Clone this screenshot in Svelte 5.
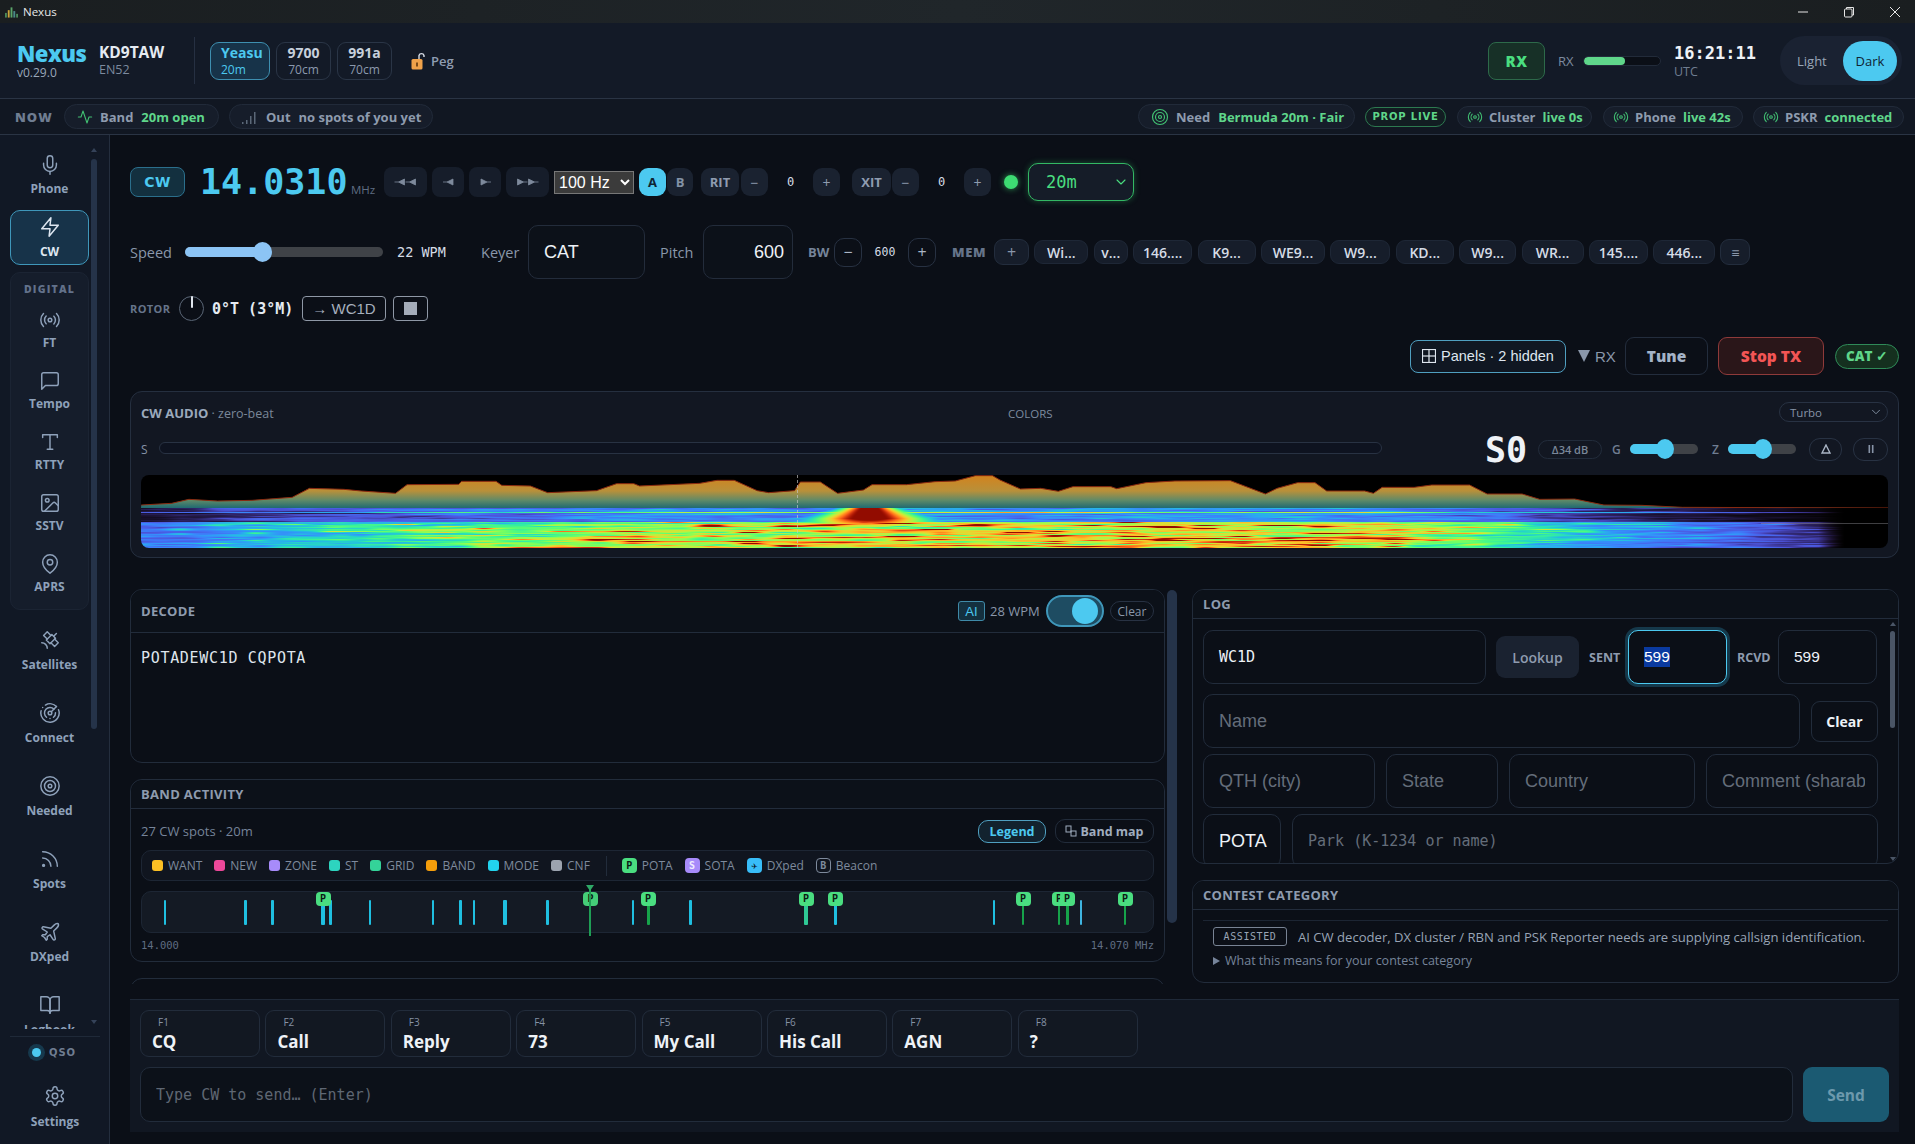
<script>
  import { onMount } from 'svelte';

  const icons = {
    mic: '<path d="M12 2a3 3 0 0 0-3 3v7a3 3 0 0 0 6 0V5a3 3 0 0 0-3-3Z"/><path d="M19 10v2a7 7 0 0 1-14 0v-2"/><line x1="12" x2="12" y1="19" y2="22"/>',
    zap: '<path d="M13 2 3 14h9l-1 8 10-12h-9l1-8z"/>',
    radio: '<path d="M4.9 19.1C1 15.2 1 8.8 4.9 4.9"/><path d="M7.8 16.2c-2.3-2.3-2.3-6.1 0-8.5"/><circle cx="12" cy="12" r="2"/><path d="M16.2 7.8c2.3 2.3 2.3 6.1 0 8.5"/><path d="M19.1 4.9C23 8.8 23 15.1 19.1 19"/>',
    msg: '<path d="M21 15a2 2 0 0 1-2 2H7l-4 4V5a2 2 0 0 1 2-2h14a2 2 0 0 1 2 2z"/>',
    type: '<polyline points="4 7 4 4 20 4 20 7"/><line x1="9" x2="15" y1="20" y2="20"/><line x1="12" x2="12" y1="4" y2="20"/>',
    image: '<rect width="18" height="18" x="3" y="3" rx="2"/><circle cx="9" cy="9" r="2"/><path d="m21 15-3.086-3.086a2 2 0 0 0-2.828 0L6 21"/>',
    pin: '<path d="M20 10c0 6-8 12-8 12s-8-6-8-12a8 8 0 0 1 16 0Z"/><circle cx="12" cy="10" r="3"/>',
    sat: '<path d="M13 7 9 3 5 7l4 4"/><path d="m17 11 4 4-4 4-4-4"/><path d="m8 12 4 4 6-6-4-4Z"/><path d="m16 8 3-3"/><path d="M9 21a6 6 0 0 0-6-6"/>',
    radar: '<path d="M19.07 4.93A10 10 0 0 0 6.99 3.34"/><path d="M4 6h.01"/><path d="M2.29 9.62A10 10 0 1 0 21.31 8.35"/><path d="M16.24 7.76A6 6 0 1 0 8.23 16.67"/><path d="M12 18h.01"/><path d="M17.99 11.66A6 6 0 0 1 15.77 16.67"/><circle cx="12" cy="12" r="2"/><path d="m13.41 10.59 5.66-5.66"/>',
    target: '<circle cx="12" cy="12" r="10"/><circle cx="12" cy="12" r="6"/><circle cx="12" cy="12" r="2"/>',
    rss: '<path d="M4 11a9 9 0 0 1 9 9"/><path d="M4 4a16 16 0 0 1 16 16"/><circle cx="5" cy="19" r="1"/>',
    plane: '<path d="M17.8 19.2 16 11l3.5-3.5C21 6 21.5 4 21 3c-1-.5-3 0-4.5 1.5L13 8 4.8 6.2c-.5-.1-.9.1-1.1.5l-.3.5c-.2.5-.1 1 .3 1.3L9 12l-2 3H4l-1 1 3 2 2 3 1-1v-3l3-2 3.5 5.3c.3.4.8.5 1.3.3l.5-.2c.4-.3.6-.7.5-1.2z"/>',
    book: '<path d="M2 3h6a4 4 0 0 1 4 4v14a3 3 0 0 0-3-3H2z"/><path d="M22 3h-6a4 4 0 0 0-4 4v14a3 3 0 0 1 3-3h7z"/>',
    gear: '<path d="M12.22 2h-.44a2 2 0 0 0-2 2v.18a2 2 0 0 1-1 1.73l-.43.25a2 2 0 0 1-2 0l-.15-.08a2 2 0 0 0-2.73.73l-.22.38a2 2 0 0 0 .73 2.73l.15.1a2 2 0 0 1 1 1.72v.51a2 2 0 0 1-1 1.74l-.15.09a2 2 0 0 0-.73 2.73l.22.38a2 2 0 0 0 2.73.73l.15-.08a2 2 0 0 1 2 0l.43.25a2 2 0 0 1 1 1.73V20a2 2 0 0 0 2 2h.44a2 2 0 0 0 2-2v-.18a2 2 0 0 1 1-1.73l.43-.25a2 2 0 0 1 2 0l.15.08a2 2 0 0 0 2.73-.73l.22-.39a2 2 0 0 0-.73-2.73l-.15-.08a2 2 0 0 1-1-1.74v-.5a2 2 0 0 1 1-1.74l.15-.09a2 2 0 0 0 .73-2.73l-.22-.38a2 2 0 0 0-2.73-.73l-.15.08a2 2 0 0 1-2 0l-.43-.25a2 2 0 0 1-1-1.73V4a2 2 0 0 0-2-2z"/><circle cx="12" cy="12" r="3"/>',
    activity: '<path d="M22 12h-4l-3 9L9 3l-3 9H2"/>',
    chev: '<path d="m6 9 6 6 6-6"/>'
  };

  const digital = [
    { icon: 'radio', label: 'FT' },
    { icon: 'msg', label: 'Tempo' },
    { icon: 'type', label: 'RTTY' },
    { icon: 'image', label: 'SSTV' },
    { icon: 'pin', label: 'APRS' }
  ];
  const others = [
    { icon: 'sat', label: 'Satellites' },
    { icon: 'radar', label: 'Connect' },
    { icon: 'target', label: 'Needed' },
    { icon: 'rss', label: 'Spots' },
    { icon: 'plane', label: 'DXped' },
    { icon: 'book', label: 'Logbook' }
  ];

  const mems = [
    ['Wi...', 54], ['v...', 34], ['146....', 59], ['K9...', 58], ['WE9...', 64], ['W9...', 60],
    ['KD...', 58], ['W9...', 57], ['WR...', 62], ['145....', 59], ['446...', 62]
  ];

  const legend = [
    ['WANT', '#fbbf24'], ['NEW', '#ec4899'], ['ZONE', '#a78bfa'], ['ST', '#2dd4bf'],
    ['GRID', '#34d399'], ['BAND', '#f59e0b'], ['MODE', '#22d3ee'], ['CNF', '#9ca3af']
  ];

  const fkeys = [
    ['F1', 'CQ'], ['F2', 'Call'], ['F3', 'Reply'], ['F4', '73'],
    ['F5', 'My Call'], ['F6', 'His Call'], ['F7', 'AGN'], ['F8', '?']
  ];

  // spot x positions are page px, timeline starts at 142
  const cy = '#1fbfe0';
  const bars = [
    [165, 2, cy], [245, 3, cy], [272, 3, cy], [323, 4, cy], [330, 3, cy], [370, 2, cy], [433, 2, cy],
    [460, 3, cy], [474, 2, cy], [505, 4, cy], [547, 3, cy], [633, 2, cy], [648, 3, '#16a34a'],
    [690, 3, cy], [806, 4, '#2fc995'], [835, 3, cy], [994, 2, cy], [1023, 2, '#16a34a'],
    [1059, 2, '#16a34a'], [1067, 3, '#16a34a'], [1081, 2, '#3fb4e0'], [1125, 2, '#16a34a']
  ];
  const pins = [323, 648, 806, 835, 1023, 1059, 1067, 1125];

  const specA = [[37,375],[90,370],[120,358],[170,363],[230,361],[300,352],[330,325],[390,328],[420,333],[480,340],[500,314],[590,313],[595,304],[655,304],[665,316],[715,318],[745,338],[830,332],[865,311],[895,311],[905,318],[1010,310],[1040,301],[1070,301],[1110,332],[1130,338],[1175,332],[1185,306],[1220,306],[1250,340],[1295,330],[1310,314],[1370,314],[1420,305],[1455,303],[1490,287],[1520,287]];
  const specB = [[0,300],[35,327],[70,325],[100,334],[125,320],[190,320],[200,326],[250,308],[300,303],[395,302],[455,342],[475,325],[510,308],[540,308],[560,333],[625,333],[640,340],[655,322],[710,322],[740,315],[805,315],[835,342],[895,342],[925,358],[985,357],[1035,375],[1100,376],[1170,382],[1523,384]];
  const contour = [
    ...specA.map(([x, y]) => [120 + x / 1.742 - 141, 380 + y / 3 - 475]),
    ...specB.map(([x, y]) => [1000 + x / 1.714 - 141, 380 + y / 3 - 475])
  ];

  let cv;

  const hash = (x, y) => {
    const s = Math.sin(x * 127.1 + y * 311.7) * 43758.5453;
    return s - Math.floor(s);
  };
  const noise = (x, y) => {
    const ix = Math.floor(x), iy = Math.floor(y);
    let fx = x - ix, fy = y - iy;
    fx = fx * fx * (3 - 2 * fx);
    fy = fy * fy * (3 - 2 * fy);
    const a = hash(ix, iy), b = hash(ix + 1, iy), c = hash(ix, iy + 1), d = hash(ix + 1, iy + 1);
    return (a + (b - a) * fx) * (1 - fy) + (c + (d - c) * fx) * fy;
  };
  const turbo = (t) => [
    34.61 + t * (1172.33 - t * (10793.56 - t * (33300.12 - t * (38394.49 - t * 14825.05)))),
    23.31 + t * (557.33 + t * (1225.33 - t * (3574.96 - t * (1073.77 + t * 707.56)))),
    27.2 + t * (3211.1 - t * (15327.97 - t * (27814 - t * (22569.18 - t * 6838.66))))
  ];
  const envelope = (f) => {
    const pts = [[0, .12], [.03, .14], [.05, .2], [.12, .27], [.18, .36], [.28, .47], [.4, .55], [.7, .54], [.76, .4], [.825, .22], [.89, .12], [.96, .05], [.975, 0], [1, 0]];
    for (let i = 1; i < pts.length; i++) {
      if (f <= pts[i][0]) {
        const [a, va] = pts[i - 1], [b, vb] = pts[i];
        return va + (vb - va) * (f - a) / (b - a);
      }
    }
    return 0;
  };

  onMount(() => {
    const w = cv.width, h = cv.height, top = 33;
    const ctx = cv.getContext('2d');
    ctx.fillStyle = '#000';
    ctx.fillRect(0, 0, w, h);

    // spectrum on top
    const g = ctx.createLinearGradient(0, 2, 0, top);
    g.addColorStop(0, '#d08420');
    g.addColorStop(.45, '#b8903a');
    g.addColorStop(.75, '#5f8a68');
    g.addColorStop(1, '#1f6a72');
    ctx.beginPath();
    ctx.moveTo(0, top);
    contour.forEach(([x, y]) => ctx.lineTo(x, y));
    ctx.lineTo(w, top);
    ctx.closePath();
    ctx.fillStyle = g;
    ctx.fill();
    ctx.beginPath();
    contour.forEach(([x, y], i) => (i ? ctx.lineTo(x, y) : ctx.moveTo(x, y)));
    ctx.lineTo(w, 32.5);
    ctx.strokeStyle = '#8a2a10';
    ctx.lineWidth = 1;
    ctx.stroke();

    // waterfall
    const img = ctx.createImageData(w, h - top);
    for (let r = 0; r < h - top; r++) {
      const line = r === 4;
      const gain = r >= 14 ? 1 : line ? .95 : r < 3 ? .32 : .3;
      for (let x = 0; x < w; x++) {
        const f = x / w;
        const n = noise(x / 95 + 3, r / 1.5) * .6 + noise(x / 20, r / .9 + 7) * .4;
        const streak = Math.pow(noise(x / 38 + 9, r / .8 + 11), 4);
        let t = envelope(f) * gain * (.5 + 1.0 * n + (r >= 14 ? 1.3 * streak : 0));
        if (r < 14 && !line) t *= .8 + .6 * noise(x / 40, r);
        const d = (x - 728) / (26 + r * 2.6);
        if (r < 17) t = Math.max(t, 1.08 * Math.exp(-d * d) * (1 - Math.max(0, r - 10) * .06));
        t = Math.min(.98, Math.max(0, t));
        const [cr, cg, cb] = turbo(t);
        const fade = Math.min(1, t / .09);
        const i = (r * w + x) * 4;
        img.data[i] = cr * fade;
        img.data[i + 1] = cg * fade;
        img.data[i + 2] = cb * fade;
        img.data[i + 3] = 255;
      }
    }
    ctx.putImageData(img, 0, top);

    ctx.fillStyle = 'rgba(180,180,190,.35)';
    ctx.fillRect(1620, 48, w - 1620, 1);
    ctx.fillStyle = 'rgba(200,200,200,.65)';
    for (let y = 0; y < h; y += 5) ctx.fillRect(656, y, 1, 3);
  });
</script>

{#snippet ic(name, cls = 'ic')}
  <svg class={cls} viewBox="0 0 24 24" fill="none" stroke="currentColor" stroke-width="1.6" stroke-linecap="round" stroke-linejoin="round">{@html icons[name]}</svg>
{/snippet}

<div class="app">
  <div class="titlebar">
    <svg class="appicon" viewBox="0 0 14 12">
      <rect x="0" y="7" width="2" height="5" fill="#4a8a5a" />
      <rect x="3" y="4" width="2" height="8" fill="#c9a33a" />
      <rect x="6" y="1" width="2" height="11" fill="#5aa56a" />
      <rect x="9" y="5" width="2" height="7" fill="#4a8a8a" />
      <rect x="12" y="8" width="2" height="4" fill="#4a8a5a" />
    </svg>
    <span class="apptitle">Nexus</span>
    <div class="winctl">
      <svg viewBox="0 0 12 12"><line x1="1" y1="6" x2="11" y2="6" /></svg>
      <svg viewBox="0 0 12 12"><rect x="1.5" y="3" width="7.5" height="8" rx="1" /><path d="M3.5 3V1.5h7V9H9" /></svg>
      <svg viewBox="0 0 12 12"><path d="M1 1l10 10M11 1L1 11" /></svg>
    </div>
  </div>

  <header class="head">
    <div class="brand">
      <div class="logo">Nexus</div>
      <div class="ver">v0.29.0</div>
    </div>
    <div class="station">
      <div class="call">KD9TAW</div>
      <div class="grid-sq">EN52</div>
    </div>
    <div class="vsep"></div>
    <div class="radio on"><b>Yeasu</b><span>20m</span></div>
    <div class="radio"><b>9700</b><span>70cm</span></div>
    <div class="radio"><b>991a</b><span>70cm</span></div>
    <div class="peg">
      <svg viewBox="0 0 14 18" class="lock">
        <rect x="0.5" y="7" width="11" height="10.5" rx="1.5" fill="#f0a24a" />
        <path d="M8 7V3.5a2.6 2.6 0 0 1 5 0V5" fill="none" stroke="#d8dde6" stroke-width="1.4" />
        <rect x="5" y="10.5" width="2" height="4" fill="#7a4a18" />
      </svg>
      <span>Peg</span>
    </div>
    <div class="spacer"></div>
    <div class="rxbox">RX</div>
    <span class="rxlbl">RX</span>
    <div class="meter"><div class="meter-fill"></div></div>
    <div class="clock">
      <div class="time">16:21:11</div>
      <div class="utc">UTC</div>
    </div>
    <div class="theme">
      <span class="light">Light</span>
      <span class="dark">Dark</span>
    </div>
  </header>

  <div class="now">
    <span class="nowlbl">NOW</span>
    <div class="pill band">
      {@render ic('activity', 'ic14 grn')}
      <b>Band</b><em>20m open</em>
    </div>
    <div class="pill out">
      <svg class="sig" viewBox="0 0 14 14"><rect x="0" y="12" width="1.5" height="2" /><rect x="4" y="10" width="1.5" height="4" /><rect x="8" y="6" width="1.5" height="8" /><rect x="12" y="2" width="1.5" height="12" /></svg>
      <b>Out</b><i>no spots of you yet</i>
    </div>
    <div class="spacer"></div>
    <div class="pill need">
      {@render ic('target', 'ic16 grn')}
      <b>Need</b><em>Bermuda 20m · Fair</em>
    </div>
    <div class="prop">PROP LIVE</div>
    <div class="pill live w-cluster">{@render ic('radio', 'ic14 grn')}<b>Cluster</b><em>live 0s</em></div>
    <div class="pill live w-phone">{@render ic('radio', 'ic14 grn')}<b>Phone</b><em>live 42s</em></div>
    <div class="pill live w-pskr">{@render ic('radio', 'ic14 grn')}<b>PSKR</b><em>connected</em></div>
  </div>

  <div class="body">
    <aside class="side">
      <div class="navwrap">
        <nav class="nav">
          <div class="item big">{@render ic('mic')}<span>Phone</span></div>
          <div class="item big active">{@render ic('zap')}<span>CW</span></div>
          <div class="group">
            <div class="grouplbl">DIGITAL</div>
            {#each digital as d}
              <div class="item dig">{@render ic(d.icon)}<span>{d.label}</span></div>
            {/each}
          </div>
          {#each others as o}
            <div class="item tall">{@render ic(o.icon)}<span>{o.label}</span></div>
          {/each}
        </nav>
        <div class="sbar">
          <div class="arr up"></div>
          <div class="sthumb"></div>
          <div class="arr dn"></div>
        </div>
      </div>
      <div class="sidefoot">
        <div class="qso"><span class="qdot"></span><span>QSO</span></div>
        <div class="item settings">{@render ic('gear')}<span>Settings</span></div>
      </div>
    </aside>

    <main class="main">
      <div class="row r1">
        <div class="modebadge">CW</div>
        <div class="freq">14.0310</div>
        <span class="mhz">MHz</span>
        <div class="tbtn wide">
          <svg viewBox="0 0 22 8" class="tri"><path d="M0 4h4M4 4l6-3v6zM11 4h4M15 4l6-3v6z" /></svg>
        </div>
        <div class="tbtn">
          <svg viewBox="0 0 11 8" class="tri one"><path d="M0 4h4M4 4l6-3v6z" /></svg>
        </div>
        <div class="tbtn">
          <svg viewBox="0 0 11 8" class="tri one"><path d="M11 4H7M7 4L1 1v6z" /></svg>
        </div>
        <div class="tbtn wide">
          <svg viewBox="0 0 22 8" class="tri"><path d="M11 4H7M7 4L1 1v6zM22 4h-4M18 4l-6-3v6z" /></svg>
        </div>
        <select class="step"><option>100 Hz</option></select>
        <div class="vfo a">A</div>
        <div class="vfo b">B</div>
        <div class="sbtn rit">RIT</div>
        <div class="sbtn pm">−</div>
        <div class="zero">0</div>
        <div class="sbtn pm">+</div>
        <div class="sbtn xit">XIT</div>
        <div class="sbtn pm">−</div>
        <div class="zero">0</div>
        <div class="sbtn pm">+</div>
        <div class="gdot"></div>
        <div class="bandsel"><span>20m</span>{@render ic('chev', 'ic14')}</div>
      </div>

      <div class="row r2">
        <span class="lbl speed">Speed</span>
        <div class="slider main-sl"><div class="fill"></div><div class="thumb"></div></div>
        <span class="wpm">22 WPM</span>
        <span class="lbl keyer">Keyer</span>
        <div class="box cat">CAT</div>
        <span class="lbl pitch">Pitch</span>
        <div class="box pit">600</div>
        <span class="bw">BW</span>
        <div class="obtn">−</div>
        <span class="bwv">600</span>
        <div class="obtn">+</div>
        <span class="memlbl">MEM</span>
        <div class="memadd">+</div>
        {#each mems as [t, w]}
          <div class="chip" style:width="{w}px">{t}</div>
        {/each}
        <div class="memlist">≡</div>
      </div>

      <div class="row r3">
        <span class="rotor">ROTOR</span>
        <div class="dial"><div class="needle"></div></div>
        <span class="bearing">0°T (3°M)</span>
        <div class="rbtn goto">→ WC1D</div>
        <div class="rbtn stop"><span></span></div>
      </div>

      <div class="row r4">
        <div class="panelsbtn">
          <svg viewBox="0 0 14 14" class="pgrid"><rect x="0.5" y="0.5" width="13" height="13" /><line x1="7" y1="0" x2="7" y2="14" /><line x1="0" y1="7" x2="14" y2="7" /></svg>
          Panels · 2 hidden
        </div>
        <span class="rxtri"><i></i>RX</span>
        <div class="tune">Tune</div>
        <div class="stoptx">Stop TX</div>
        <div class="catok">CAT ✓</div>
      </div>

      <section class="audio">
        <div class="aud-top">
          <div class="aud-title"><b>CW AUDIO</b> · zero-beat</div>
          <div class="colors">COLORS</div>
          <div class="turbo"><span>Turbo</span>{@render ic('chev', 'ic12')}</div>
        </div>
        <div class="aud-mid">
          <span class="s">S</span>
          <div class="smeter"></div>
          <span class="s0">S0</span>
          <span class="delta">Δ34 dB</span>
          <span class="gz g">G</span>
          <div class="slider mini"><div class="fill"></div><div class="thumb"></div></div>
          <span class="gz z">Z</span>
          <div class="slider mini"><div class="fill"></div><div class="thumb"></div></div>
          <div class="round r-a">
            <svg viewBox="0 0 10 10" class="delta-ic"><path d="M5 1 9 9H1z" /></svg>
          </div>
          <div class="round r-b">
            <svg viewBox="0 0 10 10" class="pause"><rect x="2.5" y="1" width="1.6" height="8" /><rect x="5.9" y="1" width="1.6" height="8" /></svg>
          </div>
        </div>
        <canvas bind:this={cv} width="1747" height="73" class="wf"></canvas>
      </section>

      <div class="split">
        <div class="left">
          <section class="panel decode">
            <div class="phead dechead">
              <span class="ptitle">DECODE</span>
              <div class="spacer"></div>
              <span class="ai">AI</span>
              <span class="dwpm">28 WPM</span>
              <div class="toggle"><span></span></div>
              <span class="dclear">Clear</span>
            </div>
            <div class="dectext">POTADEWC1D CQPOTA</div>
          </section>

          <section class="panel bandact">
            <div class="phead bahead"><span class="ptitle">BAND ACTIVITY</span></div>
            <div class="babody">
              <div class="subrow">
                <span class="spots">27 CW spots · 20m</span>
                <div class="spacer"></div>
                <span class="legendbtn">Legend</span>
                <span class="bandmap">
                  <svg viewBox="0 0 12 12" class="bmic"><rect x="1" y="1" width="5" height="6" /><rect x="6" y="6" width="5" height="5" /></svg>
                  Band map
                </span>
              </div>
              <div class="legend">
                {#each legend as [t, c]}
                  <span class="lg"><i style:background={c}></i>{t}</span>
                {/each}
                <span class="lgsep"></span>
                <span class="lg"><i class="tag tp">P</i>POTA</span>
                <span class="lg"><i class="tag ts">S</i>SOTA</span>
                <span class="lg"><i class="tag td">✈</i>DXped</span>
                <span class="lg"><i class="tag tb">B</i>Beacon</span>
              </div>
              <div class="timeline">
                {#each bars as [x, w, c]}
                  <span class="bar" style:left="{x - 142 - w / 2}px" style:width="{w}px" style:background={c}></span>
                {/each}
                {#each pins as x}
                  <span class="ppin" style:left="{x - 142 - 7.5}px">P</span>
                {/each}
                <span class="ppin mid">P</span>
                <span class="cursor"></span>
                <span class="curtri"></span>
              </div>
              <div class="scale"><span>14.000</span><span>14.070 MHz</span></div>
            </div>
          </section>

          <section class="panel clipped"></section>
        </div>

        <div class="lscroll"><div></div></div>

        <div class="right">
          <section class="panel log">
            <div class="phead loghead"><span class="ptitle">LOG</span></div>
            <div class="logbody">
              <div class="form">
                <div class="frow">
                  <div class="fld mono fcall">WC1D</div>
                  <div class="lookup">Lookup</div>
                  <span class="rst sent">SENT</span>
                  <div class="fld focus frst"><span class="sel">599</span></div>
                  <span class="rst rcvd">RCVD</span>
                  <div class="fld frst rv">599</div>
                </div>
                <div class="frow second">
                  <input class="fld fname" placeholder="Name" />
                  <div class="fclear">Clear</div>
                </div>
                <div class="frow">
                  <input class="fld f-qth" placeholder="QTH (city)" />
                  <input class="fld f-state" placeholder="State" />
                  <input class="fld f-country" placeholder="Country" />
                  <input class="fld f-comment" placeholder="Comment (sharable)" />
                </div>
                <div class="frow">
                  <div class="fld f-pota">POTA</div>
                  <input class="fld f-park" placeholder="Park (K-1234 or name)" />
                </div>
              </div>
              <div class="logbar">
                <div class="logarr up"></div>
                <div class="logthumb"></div>
                <div class="logarr dn"></div>
              </div>
            </div>
          </section>

          <section class="panel contest">
            <div class="phead conhead"><span class="ptitle">CONTEST CATEGORY</span></div>
            <div class="conbody">
              <div class="conrow">
                <span class="assisted">ASSISTED</span>
                <span>AI CW decoder, DX cluster / RBN and PSK Reporter needs are supplying callsign identification.</span>
              </div>
              <div class="condet"><span class="dtri"></span>What this means for your contest category</div>
            </div>
          </section>
        </div>
      </div>

      <div class="bottom">
        <div class="fkeys">
          {#each fkeys as [k, t]}
            <div class="fkey"><small>{k}</small><b>{t}</b></div>
          {/each}
        </div>
        <div class="sendrow">
          <input class="cwinput" placeholder="Type CW to send… (Enter)" />
          <div class="send">Send</div>
        </div>
      </div>
    </main>
  </div>
</div>

<style>
  :global(body) { margin: 0; background: #0b0f17; }
  .app {
    width: 1915px; height: 1144px; overflow: hidden; display: flex; flex-direction: column;
    background: #0b0f17; color: #d5dce6; font-family: "Open Sans", "Liberation Sans", sans-serif; font-size: 13px;
    color-scheme: dark;
  }
  .spacer { flex: 1; }
  .mono { font-family: "DejaVu Sans Mono", monospace; }

  .ic { width: 22px; height: 22px; display: block; }
  .ic12 { width: 14px; height: 14px; }
  .ic14 { width: 16px; height: 16px; }
  .ic16 { width: 18px; height: 18px; }
  .grn { color: #4ade80; opacity: .85; }

  /* title bar */
  .titlebar { height: 23px; flex: none; display: flex; align-items: center; background: linear-gradient(90deg, #1a1e20, #20262a 50%, #1a1e20); }
  .appicon { width: 13px; height: 12px; margin-left: 5px; }
  .apptitle { margin-left: 5px; font-size: 11.5px; color: #e8e8e8; }
  .winctl { margin-left: auto; display: flex; gap: 34px; margin-right: 14px; }
  .winctl svg { width: 12px; height: 12px; fill: none; stroke: #e6e6e6; stroke-width: 1; }

  /* header */
  .head { height: 76px; flex: none; box-sizing: border-box; display: flex; align-items: center; background: #131a27; border-bottom: 1px solid #2a3444; }
  .brand { margin-left: 17px; width: 82px; }
  .logo { font-size: 22px; font-weight: 800; line-height: 24px; color: #4cc9f0; letter-spacing: -.5px; }
  .ver { font-size: 12px; line-height: 14px; color: #9aa8ba; margin-top: 1px; }
  .station { width: 95px; }
  .call { font-size: 15.5px; font-weight: 700; line-height: 19px; color: #e6ebf2; }
  .grid-sq { font-size: 12.5px; line-height: 16px; color: #7d8b9f; }
  .vsep { width: 1px; height: 47px; background: #263042; }
  .radio { box-sizing: border-box; height: 38px; width: 55px; margin-left: 6px; border: 1px solid #2a3546; border-radius: 9px; display: flex; flex-direction: column; align-items: center; justify-content: center; line-height: 15px; color: #8b99ad; font-size: 12px; }
  .radio b { font-size: 14px; line-height: 18px; color: #c7d0dc; font-weight: 700; }
  .radio.on { width: 60px; margin-left: 15px; background: #173349; border-color: #3e8fb0; color: #4cc9f0; align-items: flex-start; padding-left: 10px; }
  .radio.on b { color: #4cc9f0; }
  .peg { margin-left: 19px; display: flex; align-items: center; gap: 6px; color: #8f9db1; font-weight: 600; font-size: 13px; }
  .lock { width: 14px; height: 18px; }
  .rxbox { box-sizing: border-box; width: 57px; height: 38px; border: 1px solid #2d6a4a; border-radius: 8px; background: #173027; color: #4ade80; font-weight: 800; font-size: 15px; display: flex; align-items: center; justify-content: center; letter-spacing: .5px; }
  .rxlbl { margin-left: 13px; color: #7d8b9f; font-size: 13px; width: 25px; }
  .meter { width: 78px; height: 10px; border-radius: 5px; background: #0b0f17; border: 1px solid #222b3a; box-sizing: border-box; overflow: hidden; }
  .meter-fill { width: 41px; height: 100%; background: linear-gradient(90deg, #5fd68a 66%, #49b070 66%, #49b070 67%, #5fd68a 67%); border-radius: 4px; }
  .clock { margin-left: 13px; width: 106px; padding-top: 1px; }
  .time { font-family: "DejaVu Sans Mono", monospace; font-weight: 700; font-size: 17px; line-height: 20px; color: #eef2f7; }
  .utc { font-size: 12.5px; line-height: 16px; color: #6f7d91; margin-top: 1px; }
  .theme { width: 122px; height: 49px; margin-right: 13px; box-sizing: border-box; background: #1a2232; border-radius: 25px; display: flex; align-items: center; padding-right: 5px; }
  .light { margin-left: 17px; width: 46px; color: #99a6b8; font-size: 13px; }
  .dark { width: 54px; height: 40px; border-radius: 20px; background: #4cc9f0; color: #0f2433; display: flex; align-items: center; justify-content: center; font-size: 13px; }

  /* now bar */
  .now { height: 36px; flex: none; box-sizing: border-box; border-bottom: 1px solid #2a3444; background: #111722; display: flex; align-items: center; }
  .nowlbl { margin-left: 15px; font-weight: 800; letter-spacing: 1px; color: #6f7d91; font-size: 13px; width: 49px; }
  .pill { box-sizing: border-box; height: 25px; border: 1px solid #212a39; border-radius: 13px; background: #161d2a; display: flex; align-items: center; gap: 7px; font-size: 13px; font-weight: 600; color: #8e9bae; white-space: nowrap; padding-left: 12px; }
  .pill b { font-weight: 700; color: #8e9bae; margin-right: 1px; }
  .pill em { font-style: normal; font-weight: 700; color: #5fd68a; }
  .pill i { font-style: normal; font-weight: 700; color: #8e9bae; }
  .band { width: 155px; }
  .out { width: 204px; margin-left: 10px; }
  .sig { width: 14px; height: 14px; fill: #5b6878; margin-right: 3px; }
  .need { width: 217px; }
  .prop { box-sizing: border-box; width: 81px; height: 20px; margin-left: 10px; border: 1px solid #2d7a50; border-radius: 10px; color: #5fd68a; font-family: "DejaVu Sans", sans-serif; font-weight: 700; font-size: 10px; letter-spacing: .8px; display: flex; align-items: center; justify-content: center; background: #121d22; }
  .live { height: 22px; margin-left: 11px; gap: 6px; padding-left: 9px; }
  .w-cluster { width: 135px; }
  .w-phone { width: 140px; }
  .w-pskr { width: 151px; margin-left: 10px; margin-right: 11px; }

  /* body */
  .body { flex: 1; display: flex; min-height: 0; }
  .side { width: 110px; flex: none; box-sizing: border-box; background: #111825; border-right: 1px solid #242e3e; display: flex; flex-direction: column; }
  .navwrap { height: 894px; flex: none; display: flex; overflow: hidden; }
  .nav { width: 79px; margin-left: 10px; padding-top: 12px; }
  .item { display: flex; flex-direction: column; align-items: center; color: #8ea1ba; box-sizing: border-box; }
  .item span { font-size: 12px; line-height: 14px; font-weight: 700; }
  .item.big { height: 55px; padding-top: 7px; gap: 6px; margin-bottom: 8px; }
  .item.active { background: #173349; border: 1px solid #3f97ba; border-radius: 10px; color: #dde6f0; padding-top: 5px; gap: 7px; margin-bottom: 7px; }
  .group { background: #151d2b; border: 1px solid #1b2433; border-radius: 10px; box-sizing: border-box; height: 338px; margin-bottom: 7px; }
  .grouplbl { text-align: center; font-size: 10.5px; font-weight: 800; letter-spacing: 1.2px; color: #62718a; height: 32px; line-height: 32px; }
  .item.dig { height: 61px; padding-top: 4px; gap: 5px; }
  .item.tall { height: 73px; padding-top: 12px; gap: 7px; flex: none; }
  .sbar { width: 6px; margin-left: 2px; position: relative; }
  .sthumb { position: absolute; top: 24px; left: 0; width: 6px; height: 570px; background: #253349; border-radius: 3px; }
  .arr { position: absolute; left: 0; width: 0; height: 0; border-left: 3px solid transparent; border-right: 3px solid transparent; }
  .arr.up { top: 13px; border-bottom: 4px solid #354259; }
  .arr.dn { top: 885px; border-top: 4px solid #354259; }
  .sidefoot { margin: 7px 9px 0 10px; border-top: 1px solid #1f2938; }
  .qso { height: 28px; margin-top: 1px; display: flex; align-items: center; justify-content: center; gap: 8px; font-family: "DejaVu Sans", sans-serif; font-size: 10px; font-weight: 700; letter-spacing: 1px; color: #6f7d91; }
  .qdot { width: 9px; height: 9px; border-radius: 50%; background: #4cc9f0; box-shadow: 0 0 0 4px #16384c; margin-left: -2px; }
  .settings { margin-top: 19px; padding-top: 0; gap: 8px; }

  /* main */
  .main { flex: 1; min-width: 0; display: flex; flex-direction: column; padding-left: 20px; padding-right: 16px; background: #0b0f17; }
  .row { display: flex; align-items: center; flex: none; }

  .r1 { height: 38px; margin-top: 28px; }
  .modebadge { box-sizing: border-box; width: 55px; height: 30px; border: 1px solid #2b6f8c; border-radius: 8px; background: #13303f; color: #4cc9f0; font-family: "DejaVu Sans", sans-serif; font-weight: 700; font-size: 14px; display: flex; align-items: center; justify-content: center; letter-spacing: .5px; }
  .freq { margin-left: 15px; font-family: "DejaVu Sans Mono", monospace; font-weight: 700; font-size: 35px; color: #4cc9f0; width: 147px; line-height: 38px; white-space: nowrap; }
  .mhz { margin-left: 4px; margin-top: 14px; font-size: 11.5px; color: #5f6d82; width: 23px; }
  .tbtn { width: 32px; height: 30px; margin-left: 5px; border-radius: 8px; background: #161d2a; display: flex; align-items: center; justify-content: center; }
  .mhz + .tbtn { margin-left: 10px; }
  .tbtn.wide { width: 43px; }
  .tri { width: 23px; height: 8px; fill: #7e8a9c; stroke: #7e8a9c; stroke-width: .8; }
  .tri.one { width: 11px; }
  .step { width: 80px; height: 23px; margin-left: 5px; background: #3b3b3b; color: #fff; font-family: "Liberation Sans", sans-serif; font-size: 16px; border: 1px solid #777; padding: 0; }
  .vfo { height: 28px; width: 27px; margin-left: 5px; border-radius: 9px; display: flex; align-items: center; justify-content: center; font-weight: 700; font-size: 13px; }
  .vfo.a { background: #4cc9f0; color: #0f2433; }
  .vfo.b { background: #1a2230; color: #8392a6; margin-left: 1px; width: 26px; }
  .sbtn { height: 28px; border-radius: 9px; background: #1a2230; color: #8f9cb0; display: flex; align-items: center; justify-content: center; font-weight: 700; font-size: 13px; }
  .rit { width: 38px; margin-left: 8px; }
  .xit { width: 39px; margin-left: 12px; }
  .pm { width: 27px; margin-left: 2px; font-weight: 400; font-size: 14px; }
  .xit + .pm { margin-left: 1px; }
  .zero { width: 45px; text-align: center; font-family: "DejaVu Sans Mono", monospace; font-size: 12px; color: #d5dce6; margin-right: -2px; padding-right: 2px; }
  .zero + .pm { margin-left: 0; }
  .gdot { width: 14px; height: 14px; border-radius: 50%; background: #3ddc72; margin-left: 13px; box-shadow: 0 0 6px #3ddc72aa; }
  .bandsel { box-sizing: border-box; width: 106px; height: 38px; margin-left: 10px; border: 1.5px solid #33b864; border-radius: 10px; background: #151c28; box-shadow: 0 0 6px #33b86466; display: flex; align-items: center; justify-content: space-between; padding: 0 4px 0 17px; color: #4ade80; font-family: "DejaVu Sans Mono", monospace; font-weight: 500; font-size: 17px; }

  .r2 { height: 54px; margin-top: 24px; }
  .lbl { font-size: 14.5px; color: #8a97aa; }
  .speed { width: 55px; }
  .slider { position: relative; border-radius: 6px; background: #3f4247; }
  .main-sl { width: 198px; height: 10px; }
  .fill { position: absolute; left: 0; top: 0; bottom: 0; border-radius: 5px; }
  .thumb { position: absolute; border-radius: 50%; }
  .main-sl .fill { width: 77px; background: #8cc4f5; }
  .main-sl .thumb { left: 68px; top: -5px; width: 19px; height: 20px; background: #8cc4f5; }
  .wpm { margin-left: 14px; width: 84px; font-family: "DejaVu Sans Mono", monospace; font-size: 13.5px; color: #d5dce6; }
  .keyer { width: 47px; }
  .box { box-sizing: border-box; height: 54px; border: 1px solid #232c3b; border-radius: 10px; background: #0c1119; display: flex; align-items: center; font-family: "Liberation Sans", sans-serif; font-size: 18px; color: #eef2f7; }
  .cat { width: 117px; padding-left: 15px; }
  .pitch { margin-left: 15px; width: 43px; }
  .pit { width: 90px; justify-content: flex-end; padding-right: 8px; }
  .bw { margin-left: 15px; width: 26px; font-size: 13px; font-weight: 700; color: #76849a; }
  .obtn { box-sizing: border-box; width: 28px; height: 29px; border: 1px solid #273142; border-radius: 10px; display: flex; align-items: center; justify-content: center; color: #aab5c5; font-size: 16px; }
  .bwv { width: 46px; text-align: center; font-family: "DejaVu Sans Mono", monospace; font-size: 11.5px; color: #d5dce6; }
  .memlbl { margin-left: 16px; width: 42px; font-weight: 800; font-size: 13px; letter-spacing: .7px; color: #66748a; }
  .memadd { box-sizing: border-box; width: 35px; height: 26px; border-radius: 9px; border: 1px solid #232d3d; background: #161d2a; color: #8a97aa; font-size: 16px; display: flex; align-items: center; justify-content: center; }
  .chip { box-sizing: border-box; height: 24px; margin-left: 5.4px; border-radius: 9px; background: #161d2a; border: 1px solid #1e2736; color: #d5dce6; font-size: 14px; font-weight: 600; display: flex; align-items: center; justify-content: center; white-space: nowrap; }
  .memlist { box-sizing: border-box; width: 30px; height: 26px; margin-left: 5px; border-radius: 9px; background: #161d2a; border: 1px solid #232d3d; color: #8a97aa; font-size: 14px; display: flex; align-items: center; justify-content: center; }

  .r3 { height: 25px; margin-top: 17px; }
  .rotor { width: 49px; font-size: 11px; font-weight: 700; letter-spacing: .4px; color: #66748a; }
  .dial { box-sizing: border-box; width: 25px; height: 25px; border: 1px solid #5a6676; border-radius: 50%; position: relative; }
  .needle { position: absolute; left: 10.5px; top: -1px; width: 2px; height: 12px; background: #dfe5ed; border-radius: 1px; }
  .bearing { margin-left: 8px; width: 90px; font-family: "DejaVu Sans Mono", monospace; font-weight: 700; font-size: 15px; color: #e6ebf2; white-space: nowrap; }
  .rbtn { box-sizing: border-box; height: 25px; border: 1px solid #8f98a6; border-radius: 4px; display: flex; align-items: center; justify-content: center; color: #a6b0be; font-family: "Liberation Sans", sans-serif; font-size: 15px; }
  .goto { width: 84px; }
  .stop { width: 35px; margin-left: 7px; }
  .stop span { width: 13px; height: 13px; background: #a4acb9; }

  .r4 { height: 38px; margin-top: 16px; justify-content: flex-end; }
  .panelsbtn { box-sizing: border-box; width: 156px; height: 33px; border: 1px solid #4f9fc0; border-radius: 8px; background: #101722; color: #dfe6ef; font-family: "Liberation Sans", "Open Sans", sans-serif; font-size: 14.5px; display: flex; align-items: center; justify-content: center; gap: 5px; }
  .pgrid { width: 14px; height: 14px; fill: none; stroke: #dfe6ef; stroke-width: 1.2; }
  .rxtri { margin-left: 12px; width: 47px; font-family: "Liberation Sans", sans-serif; font-size: 15px; color: #8a97aa; white-space: nowrap; display: flex; align-items: center; gap: 5px; }
  .rxtri i { width: 0; height: 0; border-left: 6px solid transparent; border-right: 6px solid transparent; border-top: 12px solid #8a97aa; }
  .tune { box-sizing: border-box; width: 83px; height: 38px; border: 1px solid #232d3d; border-radius: 9px; display: flex; align-items: center; justify-content: center; font-weight: 800; font-size: 15.5px; color: #a4b3c7; }
  .stoptx { box-sizing: border-box; width: 106px; height: 38px; margin-left: 10px; border: 1px solid #8f3a3a; border-radius: 9px; background: #2a1619; display: flex; align-items: center; justify-content: center; font-weight: 800; font-size: 15.5px; color: #f25555; }
  .catok { box-sizing: border-box; width: 64px; height: 25px; margin-left: 11px; border: 1px solid #2f8a58; border-radius: 13px; background: #15301f; color: #5fd68a; font-weight: 800; font-size: 13.5px; display: flex; align-items: center; justify-content: center; white-space: nowrap; }

  /* audio */
  .audio { box-sizing: border-box; height: 167px; margin-top: 16px; border: 1px solid #252f3f; border-radius: 12px; background: #121722; flex: none; padding: 0 10px; }
  .aud-top { height: 42px; display: flex; align-items: center; position: relative; }
  .aud-title { font-size: 12.5px; color: #7a8799; }
  .aud-title b { color: #9ba9bb; font-weight: 700; font-size: 13px; }
  .colors { position: absolute; left: 867px; font-size: 11.5px; color: #7d8b9f; }
  .turbo { box-sizing: border-box; margin-left: auto; width: 109px; height: 20px; border: 1px solid #283243; border-radius: 10px; display: flex; align-items: center; justify-content: space-between; padding: 0 4px 0 10px; color: #8794a7; font-size: 11.5px; margin-top: -2px; }
  .aud-mid { height: 30px; display: flex; align-items: center; margin-bottom: 0; }
  .s { width: 18px; color: #8592a5; font-size: 12px; }
  .smeter { box-sizing: border-box; width: 1223px; height: 12px; border: 1px solid #283243; border-radius: 7px; background: #0e1320; margin-top: -3px; }
  .s0 { margin-left: 103px; width: 53px; font-family: "DejaVu Sans Mono", monospace; font-weight: 700; font-size: 35px; color: #eef2f7; line-height: 30px; margin-top: 2px; }
  .delta { box-sizing: border-box; width: 64px; height: 19px; border: 1px solid #222c3b; border-radius: 10px; font-size: 11px; font-weight: 600; color: #7a8799; display: flex; align-items: center; justify-content: center; }
  .gz { font-size: 12px; color: #6f7d91; font-weight: 600; }
  .gz.g { margin-left: 10px; width: 18px; }
  .gz.z { margin-left: 14px; width: 16px; }
  .mini { width: 68px; height: 10px; }
  .mini .fill { width: 36px; background: #4cc9f0; }
  .mini .thumb { left: 26px; top: -5px; width: 18px; height: 20px; background: #4cc9f0; }
  .round { box-sizing: border-box; height: 23px; border: 1px solid #283243; border-radius: 11px; display: flex; align-items: center; justify-content: center; }
  .r-a { width: 33px; margin-left: 13px; }
  .r-b { width: 35px; margin-left: 11px; }
  .delta-ic { width: 10px; height: 10px; fill: none; stroke: #aab5c5; stroke-width: 1.4; }
  .pause { width: 10px; height: 10px; fill: #8794a7; }
  .wf { display: block; width: 1747px; height: 73px; margin-top: 11px; border-radius: 8px; }

  /* split */
  .split { height: 395px; margin-top: 31px; flex: none; display: flex; }
  .left { width: 1035px; overflow: hidden; height: 395px; flex: none; }
  .right { width: 707px; flex: none; margin-left: 15px; }
  .lscroll { width: 10px; margin-left: 2px; }
  .lscroll div { width: 10px; height: 333px; margin-top: 1px; background: #253349; border-radius: 5px; }
  .panel { box-sizing: border-box; border: 1px solid #222c3b; border-radius: 12px; background: #0b0f17; overflow: hidden; }
  .phead { display: flex; align-items: center; padding: 0 10px; border-bottom: 1px solid #222c3b; box-sizing: border-box; background: #0c1119; }
  .ptitle { font-weight: 700; font-size: 13px; letter-spacing: .3px; color: #8e9bae; }

  .decode { height: 174px; }
  .dechead { height: 43px; }
  .ai { box-sizing: border-box; width: 27px; height: 20px; border: 1px solid #3f8aa8; border-radius: 3px; background: #14303f; color: #4cc9f0; font-family: "Liberation Sans", sans-serif; font-size: 13px; display: flex; align-items: center; justify-content: center; }
  .dwpm { margin-left: 5px; width: 56px; font-size: 13px; color: #8a97aa; white-space: nowrap; }
  .toggle { box-sizing: border-box; width: 58px; height: 32px; border: 2px solid #3f97ba; border-radius: 16px; background: #1e4c62; position: relative; }
  .toggle span { position: absolute; right: 4px; top: 1px; width: 26px; height: 26px; border-radius: 50%; background: #4cc9f0; }
  .dclear { box-sizing: border-box; width: 44px; height: 20px; margin-left: 6px; border: 1px solid #283243; border-radius: 10px; font-size: 12px; color: #8a97aa; display: flex; align-items: center; justify-content: center; }
  .dectext { padding: 15px 10px; font-family: "DejaVu Sans Mono", monospace; font-size: 15px; color: #dfe5ed; line-height: 20px; letter-spacing: .68px; }

  .bandact { height: 183px; margin-top: 16px; overflow: visible; }
  .bahead { height: 29px; border-radius: 12px 12px 0 0; }
  .babody { padding: 10px 10px 0; }
  .subrow { height: 24px; display: flex; align-items: center; }
  .spots { font-size: 13px; color: #76849a; }
  .legendbtn { box-sizing: border-box; width: 68px; height: 23px; border: 1px solid #4f9fc0; border-radius: 10px; background: #12222e; color: #4cc9f0; font-weight: 700; font-size: 12.5px; display: flex; align-items: center; justify-content: center; }
  .bandmap { box-sizing: border-box; width: 99px; height: 24px; margin-left: 9px; border: 1px solid #222c3b; border-radius: 10px; display: flex; align-items: center; justify-content: center; gap: 3px; font-weight: 700; font-size: 12.5px; color: #a0adbf; }
  .bmic { width: 12px; height: 12px; fill: none; stroke: #a0adbf; stroke-width: 1; }
  .legend { box-sizing: border-box; height: 31px; margin-top: 7px; border: 1px solid #1d2634; border-radius: 10px; background: #10151f; display: flex; align-items: center; padding-left: 10px; gap: 12px; }
  .lg { display: flex; align-items: center; gap: 5px; font-size: 12px; color: #7e8a9c; }
  .lg i { width: 11px; height: 11px; border-radius: 3px; display: block; }
  .lg i.tag { width: 15px; height: 15px; border-radius: 4px; font-style: normal; font-family: "DejaVu Sans Mono", monospace; font-weight: 700; font-size: 10px; line-height: 15px; text-align: center; color: #0c1a14; }
  .tp { background: #4ade80; }
  .ts { background: #a78bfa; color: #f0ecff !important; }
  .td { background: #38bdf8; color: #0c1a2a !important; }
  .tb { box-sizing: border-box; border: 1px solid #7e8a9c; color: #7e8a9c !important; line-height: 13px !important; }
  .lgsep { width: 1px; height: 20px; background: #222c3b; margin: 0 3px 0 4px; }
  .timeline { box-sizing: border-box; height: 42px; margin-top: 10px; border: 1px solid #1d2634; border-radius: 10px; background: #141a24; position: relative; }
  .bar { position: absolute; top: 8px; height: 25px; border-radius: 1px; }
  .ppin { position: absolute; top: 0; width: 15px; height: 14px; border-radius: 4px; background: #4ade80; color: #0c1a14; font-family: "DejaVu Sans Mono", monospace; font-weight: 700; font-size: 10px; line-height: 14px; text-align: center; }
  .ppin.mid { left: 441px; top: 0; height: 14px; opacity: .92; }
  .cursor { position: absolute; left: 447px; top: -3px; width: 2px; height: 47px; background: #1f9e55; }
  .curtri { position: absolute; left: 443.5px; top: -7px; width: 0; height: 0; border-left: 4.5px solid transparent; border-right: 4.5px solid transparent; border-top: 6px solid #2fa866; }
  .scale { display: flex; justify-content: space-between; margin-top: 5px; font-family: "DejaVu Sans Mono", monospace; font-size: 10.5px; color: #5f6d82; line-height: 14px; }
  .clipped { height: 40px; margin-top: 16px; }

  /* log */
  .log { height: 275px; }
  .loghead { height: 29px; }
  .logbody { display: flex; height: 245px; overflow: hidden; }
  .form { width: 675px; margin-left: 10px; padding-top: 11px; flex: none; }
  .frow { display: flex; align-items: center; margin-bottom: 6px; gap: 10px; flex: none; }
  .frow:first-child { margin-bottom: 10px; }
  .fld { box-sizing: border-box; height: 54px; border: 1px solid #222c3b; border-radius: 10px; background: #0b0f17; color: #eef2f7; font-family: "Liberation Sans", sans-serif; font-size: 18px; padding: 0 15px; outline: none; display: flex; align-items: center; flex: none; min-width: 0; }
  .fld::placeholder { color: #646d7a; opacity: 1; }
  .fcall { width: 283px; font-family: "DejaVu Sans Mono", monospace; font-size: 15px; }
  .lookup { width: 83px; height: 42px; border-radius: 9px; background: #1a2230; color: #8e9bae; font-weight: 600; font-size: 14px; display: flex; align-items: center; justify-content: center; }
  .rst { font-size: 12.5px; font-weight: 700; color: #8e9bae; }
  .sent { margin-right: -3px; width: 32px; }
  .rcvd { margin-right: -4px; width: 35px; }
  .frst { width: 99px; font-family: "Liberation Sans", sans-serif; font-size: 15.5px; }
  .rv { margin-left: 0; }
  .focus { border-color: #4cc9f0; box-shadow: 0 0 0 3px #15384a; }
  .sel { background: #0a3aa0; color: #fff; padding: 1px 0; }
  .fname { width: 597px; }
  .fclear { box-sizing: border-box; width: 68px; height: 41px; margin-left: 1px; border: 1px solid #222c3b; border-radius: 9px; display: flex; align-items: center; justify-content: center; font-weight: 700; font-size: 14px; color: #eef2f7; }
  .f-qth { width: 172px; }
  .f-state { width: 112px; margin-left: 1px; }
  .f-country { width: 186px; margin-left: 1px; }
  .f-comment { width: 172px; margin-left: 1px; padding-right: 12px; }
  .f-pota { width: 78px; font-weight: 400; }
  .f-park { width: 586px; margin-left: 1px; font-family: "DejaVu Sans Mono", monospace; font-size: 15px; }
  .logbar { width: 6px; margin-left: 12px; position: relative; }
  .logthumb { position: absolute; top: 12px; width: 5px; height: 97px; background: #4a5566; border-radius: 3px; }
  .logarr { position: absolute; left: 0; width: 0; height: 0; border-left: 3px solid transparent; border-right: 3px solid transparent; }
  .logarr.up { top: 3px; border-bottom: 4px solid #4a5566; }
  .logarr.dn { bottom: 3px; border-top: 4px solid #4a5566; }

  .contest { height: 103px; margin-top: 16px; }
  .conhead { height: 29px; }
  .conbody { margin: 10px 10px 0; border-top: 1px solid #1c2533; padding: 6px 10px 0; }
  .conrow { display: flex; align-items: center; gap: 11px; font-size: 13.1px; color: #98a4b5; white-space: nowrap; }
  .assisted { box-sizing: border-box; width: 74px; height: 19px; border: 1px solid #788394; border-radius: 3px; font-family: "DejaVu Sans Mono", monospace; font-size: 10px; letter-spacing: .6px; color: #98a4b5; display: flex; align-items: center; justify-content: center; flex: none; }
  .condet { display: flex; align-items: center; gap: 5px; margin-top: 6px; font-size: 12.5px; color: #76849a; }
  .dtri { width: 0; height: 0; border-left: 7px solid #76849a; border-top: 4px solid transparent; border-bottom: 4px solid transparent; }

  /* bottom */
  .bottom { box-sizing: border-box; height: 133px; margin-top: 15px; flex: none; background: #111722; border-top: 1px solid #1f2938; padding: 10px 10px 10px; }
  .fkeys { display: flex; gap: 5.4px; }
  .fkey { box-sizing: border-box; width: 120px; height: 47px; border: 1px solid #222c3b; border-radius: 9px; background: #121822; padding: 4px 11px 0; display: flex; flex-direction: column; }
  .fkey small { font-size: 10px; line-height: 15px; color: #8592a5; margin-left: 6px; }
  .fkey b { font-size: 17px; line-height: 23px; font-weight: 700; color: #eef2f7; white-space: nowrap; }
  .sendrow { display: flex; gap: 10px; margin-top: 10px; align-items: center; }
  .cwinput { box-sizing: border-box; width: 1653px; height: 55px; flex: none; border: 1px solid #222c3b; border-radius: 10px; background: #0c1119; padding: 0 15px; outline: none; font-family: "DejaVu Sans Mono", monospace; font-size: 15px; color: #eef2f7; }
  .cwinput::placeholder { color: #5f6773; opacity: 1; }
  .send { width: 86px; height: 55px; border-radius: 9px; background: #1b5a72; color: #6d99ad; font-weight: 700; font-size: 15.5px; display: flex; align-items: center; justify-content: center; }
</style>
